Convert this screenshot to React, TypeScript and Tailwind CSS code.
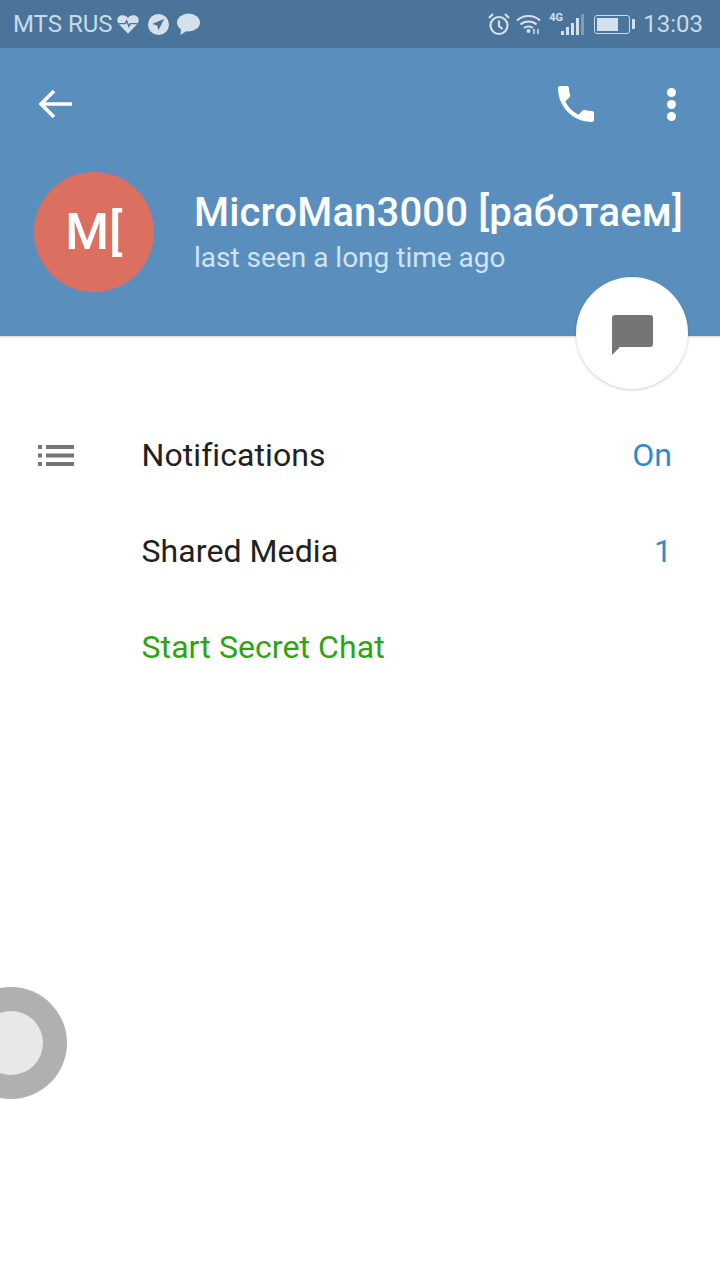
const Row = ({ label, value, labelClass, icon }: { label: string; value?: string; labelClass: string; icon?: boolean }) => (
  <div className="h-24 flex items-center pr-[48px]">
    <div className="w-[141.500px] pl-[38px] shrink-0">
      {icon && (
        <svg width="37" height="22" viewBox="0 0 37 22" className="block" fill="#757575">
          <rect x="0" y="1" width="4" height="4" />
          <rect x="8" y="1" width="28" height="4" />
          <rect x="0" y="9.500" width="4" height="4" />
          <rect x="8" y="9.500" width="28" height="4" />
          <rect x="0" y="18" width="4" height="4" />
          <rect x="8" y="18" width="28" height="4" />
        </svg>
      )}
    </div>
    <span className={`text-[32px] leading-none tracking-[0.08px] ${labelClass}`}>{label}</span>
    {value && <span className="ml-auto text-[32px] leading-none text-[#2f8ccc]">{value}</span>}
  </div>
);

const StatusBar = () => (
  <div className="h-12 bg-[#4a7499] flex items-center pl-[13px] pr-[17px] text-[#c9dbea] text-[24px]">
    <span className="mr-[4px]">MTS RUS</span>
    <svg width="22" height="21" viewBox="0 0 24 22" fill="#d4e1ec" className="mr-[9px]">
      <path d="M12 21 1.500 10C-1 6.500.5 1 6 1c3 0 5 1.500 6 3 1-1.500 3-3 6-3 5.500 0 7 5.500 4.500 9z" />
      <path d="M2 10h7l1.500-3 2.500 6 1.500-3h8" fill="none" stroke="#4a7499" strokeWidth="1.500" />
    </svg>
    <svg width="21" height="21" viewBox="0 0 22 22" className="mr-[8px]">
      <circle cx="11" cy="11" r="11" fill="#d4e1ec" />
      <path d="M17 5 4.500 10.500l5 1.500 1.500 5z" fill="#4a7499" />
    </svg>
    <svg width="23" height="22" viewBox="0 0 23 22" fill="#d4e1ec">
      <ellipse cx="11.500" cy="9.500" rx="11.500" ry="9" />
      <path d="M4 15 3.500 22 11 17z" />
    </svg>
    <div className="ml-auto flex items-center">
      <svg width="22" height="24" viewBox="0 0 22 24" fill="none" stroke="#d4e1ec" strokeWidth="2.200" className="mr-[6px]">
        <circle cx="11" cy="13.500" r="8.500" />
        <path d="M11 8.500v5.500l3.500 3M1 6l4-4M21 6l-4-4" />
      </svg>
      <svg width="25" height="21" viewBox="0 0 25 21" className="mr-[8px]" fill="none" stroke="#d4e1ec" strokeWidth="2.200">
        <path d="M1 6.500c6.500-6 16.500-6 23 0M4.500 10.500c4.500-4 11.500-4 16 0M8 14c2.500-2 6.500-2 9 0" />
        <circle cx="12.500" cy="17" r="2" fill="#d4e1ec" stroke="none" />
        <path d="M18 15v5M22 15v5" stroke="#d4e1ec" strokeWidth="1.500" />
      </svg>
      <div className="relative w-[35px] h-[22px] mr-[10px]">
        <span className="absolute top-0 left-0 text-[11px] font-bold leading-[10px] text-[#d4e1ec]">4G</span>
        <div className="absolute inset-0 flex items-end justify-end gap-[2px]">
          <div className="w-[3px] h-[4px] bg-[#d4e1ec]" />
          <div className="w-[3px] h-[8px] bg-[#d4e1ec]" />
          <div className="w-[3px] h-[12px] bg-[#d4e1ec]" />
          <div className="w-[3px] h-[17px] bg-[#d4e1ec]" />
          <div className="w-[3px] h-[21px] bg-[#7f9db8]" />
        </div>
      </div>
      <div className="w-[36px] h-[19px] border border-[#c9dbea] rounded-[3px] p-[2px] mr-[2px]">
        <div className="w-[21px] h-full bg-[#d4e1ec]" />
      </div>
      <div className="w-[3px] h-[10px] bg-[#d4e1ec] rounded-r-[1px] mr-[8px]" />
      <span>13:03</span>
    </div>
  </div>
);

export default function App() {
  return (
    <div className="relative w-[720px] h-[1280px] overflow-hidden bg-white font-['Roboto',sans-serif]">
      <StatusBar />
      <div className="relative h-[288px] bg-[#5a8fbd] shadow-[0_1px_2px_rgba(0,0,0,0.18)]">
        <div className="flex items-center h-28 pl-[38px] pr-[44px]">
          <svg width="34" height="30" viewBox="0 0 34 30" fill="none" stroke="white" strokeWidth="3.600">
            <path d="M34 15H3M16 2 3 15l13 13" />
          </svg>
          <svg width="48" height="48" viewBox="0 0 24 24" fill="white" className="ml-auto mr-[67px]">
            <path d="M6.620 10.790c1.440 2.830 3.760 5.140 6.590 6.590l2.200-2.200c.27-.27.67-.36 1.020-.24 1.120.37 2.330.57 3.570.57.55 0 1 .45 1 1V20c0 .55-.45 1-1 1-9.390 0-17-7.610-17-17 0-.55.45-1 1-1h3.500c.55 0 1 .45 1 1 0 1.250.2 2.450.57 3.570.11.35.03.74-.25 1.020l-2.200 2.200z" />
          </svg>
          <div className="flex flex-col gap-[3px]">
            <div className="w-[9px] h-[9px] rounded-full bg-white" />
            <div className="w-[9px] h-[9px] rounded-full bg-white" />
            <div className="w-[9px] h-[9px] rounded-full bg-white" />
          </div>
        </div>
        <div className="flex items-center pl-[34px] mt-[12px]">
          <div className="w-[120px] h-[120px] rounded-full bg-[#db6f60] flex items-center justify-center text-white text-[50px] font-medium shrink-0">
            M[
          </div>
          <div className="ml-[40px]">
            <div className="text-[40px] leading-[46px] font-medium tracking-[0.17px] text-white whitespace-nowrap">MicroMan3000 [работаем]</div>
            <div className="text-[28px] leading-[32px] text-[#cfe4f5] mt-[6px]">last seen a long time ago</div>
          </div>
        </div>
      </div>
      <div className="mt-[71px]">
        <Row label="Notifications" value="On" labelClass="text-[#212121]" icon />
        <Row label="Shared Media" value="1" labelClass="text-[#212121]" />
        <Row label="Start Secret Chat" labelClass="text-[#2ea40f]" />
      </div>
      <div className="absolute left-[576px] top-[277px] w-28 h-28 rounded-full bg-white shadow-[0_1px_3px_rgba(0,0,0,0.2)] flex items-center justify-center">
        <svg width="41" height="40" viewBox="0 0 41 40" fill="#757575" className="mt-[4px]">
          <path d="M3 0h35a3 3 0 0 1 3 3v26a3 3 0 0 1-3 3H8l-8 8V3a3 3 0 0 1 3-3z" />
        </svg>
      </div>
      <div className="absolute left-[-45px] top-[987px] w-28 h-28 rounded-full bg-[#b0b0b0] flex items-center justify-center">
        <div className="w-16 h-16 rounded-full bg-[#e8e8e8]" />
      </div>
    </div>
  );
}
